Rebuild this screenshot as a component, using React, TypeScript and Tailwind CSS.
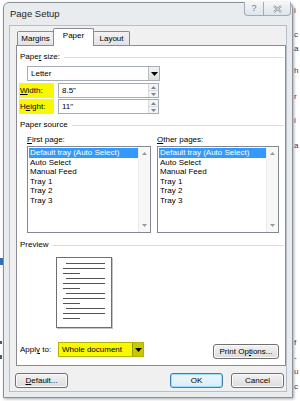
import React from "react";

const Caret = ({ up = false, className = "" }: { up?: boolean; className?: string }) => (
  <svg width="7" height="4" viewBox="0 0 7 4" className={className}>
    <path d={up ? "M0 4 L3.5 0 L7 4 Z" : "M0 0 L7 0 L3.5 4 Z"} fill="currentColor" />
  </svg>
);

const GroupHeader = ({ children, className = "" }: { children: React.ReactNode; className?: string }) => (
  <div className={`flex items-center h-[10px] ${className}`}>
    <span className="leading-[10px] whitespace-nowrap">{children}</span>
    <div className="flex-1 h-px bg-[#dcdcdc] ml-[4px] mr-[1px]" />
  </div>
);

const Select = ({ value, w, yellow = false }: { value: string; w: string; yellow?: boolean }) => (
  <div
    className={`flex h-[15px] ${w} border ${
      yellow ? "border-[#b4b400] bg-[#f8f800]" : "border-[#a5acb5] bg-white"
    }`}
  >
    <span className="flex-1 pl-[3px] leading-[13px] whitespace-nowrap">{value}</span>
    <div
      className={`w-[11px] flex items-center justify-center border-l ${
        yellow ? "border-[#9a9a00] bg-[#c9c900]" : "border-[#b7bcc2] bg-gradient-to-b from-[#f3f3f3] to-[#dedede]"
      }`}
    >
      <Caret className="text-black" />
    </div>
  </div>
);

const Spin = ({ label, accent, value }: { label: string; accent: number; value: string }) => (
  <div className="flex items-center h-[15px]">
    <div className="-ml-[1px] w-[35px] h-[15px] bg-[#f8f800] pl-[1px] leading-[15px]">
      {label.slice(0, accent)}
      <span className="underline">{label[accent]}</span>
      {label.slice(accent + 1)}
    </div>
    <div className="ml-[4px] w-[101px] h-[15px] flex border border-[#a5acb5] bg-white">
      <span className="flex-1 pl-[3px] leading-[13px]">{value}</span>
      <div className="w-[10px] flex flex-col border-l border-[#d5d8dc] bg-[#f4f4f4] text-[#7b8594]">
        <div className="flex-1 flex items-center justify-center border-b border-[#d5d8dc]">
          <svg width="5" height="3" viewBox="0 0 5 3"><path d="M0 3 L2.5 0 L5 3 Z" fill="currentColor" /></svg>
        </div>
        <div className="flex-1 flex items-center justify-center">
          <svg width="5" height="3" viewBox="0 0 5 3"><path d="M0 0 L5 0 L2.5 3 Z" fill="currentColor" /></svg>
        </div>
      </div>
    </div>
  </div>
);

const trays = ["Default tray (Auto Select)", "Auto Select", "Manual Feed", "Tray 1", "Tray 2", "Tray 3"];

const ListBox = ({ w }: { w: string }) => (
  <div className={`${w} h-[87px] flex border border-[#828790] bg-white`}>
    <div className="flex-1 pt-px pl-px">
      {trays.map((t, i) => (
        <div
          key={t}
          className={`h-[9.6px] leading-[9.6px] pl-[1px] whitespace-nowrap ${
            i === 0 ? "bg-[#3399ff] text-white" : "text-black"
          }`}
        >
          {t}
        </div>
      ))}
    </div>
    <div className="w-[12px] flex flex-col justify-between items-center py-[5px] bg-[#f7f7f7] border-l border-[#ececec] text-[#9a9a9a]">
      <svg width="5" height="3" viewBox="0 0 5 3"><path d="M0 3 L2.5 0 L5 3 Z" fill="currentColor" /></svg>
      <svg width="5" height="3" viewBox="0 0 5 3"><path d="M0 0 L5 0 L2.5 3 Z" fill="currentColor" /></svg>
    </div>
  </div>
);

const Para = () => (
  <div className="flex flex-col gap-[4px]">
    <div className="h-px bg-[#555] ml-[3px]" />
    <div className="h-px bg-[#555]" />
    <div className="h-px bg-[#555] w-[17px]" />
  </div>
);

const Button = ({ children, w, focus = false }: { children: React.ReactNode; w: string; focus?: boolean }) => (
  <div
    className={`${w} h-[15px] rounded-[3px] border flex items-center justify-center leading-none ${
      focus
        ? "border-[#3c7fb1] bg-gradient-to-b from-[#eaf6fd] to-[#d9eefa] shadow-[inset_0_0_0_1px_#9fdcf6]"
        : "border-[#707070] bg-gradient-to-b from-[#f2f2f2] to-[#dcdcdc] shadow-[inset_0_0_0_1px_#fbfbfb]"
    }`}
  >
    {children}
  </div>
);

// letters of the document that peek out beside the dialog
const edgeText: [number, string][] = [
  [6, "i"],
  [30, "c"],
  [44, "a"],
  [66, "h"],
  [92, "r"],
  [116, "i"],
  [141, "a"],
  [338, "f"],
  [353, "-"],
  [367, "u"],
  [382, "c"],
];

export default function App() {
  return (
    <div className="w-[300px] h-[401px] bg-white flex overflow-hidden font-['Liberation_Sans',Arial,sans-serif] text-[8px] text-black">
      {/* document behind, left edge */}
      <div className="w-[3px] flex flex-col">
        <div className="h-[258px]" />
        <div className="h-[7px] bg-[#3a6fb5]" />
        <div className="mt-[76px] h-[3px] w-[2px] bg-[#4a5a78]" />
        <div className="mt-[11px] h-[4px] w-[2px] bg-[#4a5a78]" />
      </div>

      {/* dialog window */}
      <div className="mt-[2px] w-[290px] h-[396px] flex flex-col border border-[#8a939d] rounded-t-[6px] bg-[#e9ecef] shadow-[1px_1px_3px_rgba(0,0,0,0.35)]">
        <div className="h-[22px] flex items-start">
          <span className="pl-[6px] pt-[5px] text-[9.5px] leading-[11px] text-[#1e1e1e]">Page Setup</span>
          <div className="flex-1" />
          <div className="-mt-px flex mr-px">
            <div className="w-[19px] h-[14px] border border-t-0 border-r-0 border-[#a2acb8] rounded-bl-[4px] bg-gradient-to-b from-[#f4f6f8] to-[#e0e5ea] flex items-center justify-center text-[9px] text-[#6d7580] leading-none">
              ?
            </div>
            <div className="w-[28px] h-[14px] border border-t-0 border-[#a2acb8] rounded-br-[4px] bg-gradient-to-b from-[#f4f6f8] to-[#e0e5ea] flex items-center justify-center">
              <svg width="9" height="8" viewBox="0 0 9 8">
                <path d="M1 1 L8 7 M8 1 L1 7" stroke="#8a929c" strokeWidth="2.2" />
                <path d="M1 1 L8 7 M8 1 L1 7" stroke="#eef0f2" strokeWidth="0.8" />
              </svg>
            </div>
          </div>
        </div>

        <div className="mx-[5px] mb-[5px] flex-1 flex flex-col bg-[#f0f0f0] border border-[#b6bdc6]">
          {/* tabs */}
          <div className="flex items-end h-[19px] pl-[7px]">
            <div className="w-[37px] h-[14px] border border-b-0 border-[#898c95] rounded-t-[2px] bg-gradient-to-b from-[#f3f3f3] to-[#e2e2e2] flex items-center justify-center leading-none">
              Margins
            </div>
            <div className="relative z-10 -ml-px -mb-px w-[41px] h-[18px] border border-b-0 border-[#898c95] rounded-t-[2px] bg-white flex items-start pt-[3px] justify-center leading-none">
              Paper
            </div>
            <div className="-ml-px w-[37px] h-[14px] border border-b-0 border-[#898c95] rounded-t-[2px] bg-gradient-to-b from-[#f3f3f3] to-[#e2e2e2] flex items-center justify-center leading-none">
              Layout
            </div>
          </div>

          {/* panel */}
          <div className="ml-[6px] w-[270px] h-[321px] border border-[#898c95] bg-white flex flex-col pl-[3px]">
            <GroupHeader className="mt-[6px]">
              Pape<span className="underline">r</span> size:
            </GroupHeader>
            <div className="mt-[4px] ml-[7px]">
              <Select value="Letter" w="w-[133px]" />
            </div>
            <div className="mt-[2px]">
              <Spin label="Width:" accent={0} value={'8.5"'} />
            </div>
            <div className="mt-[1px]">
              <Spin label="Height:" accent={1} value={'11"'} />
            </div>

            <GroupHeader className="mt-[6px]">Paper source</GroupHeader>
            <div className="mt-[5px] ml-[7px] flex gap-[6px]">
              <div className="flex flex-col">
                <span className="h-[10px] leading-[10px]">
                  <span className="underline">F</span>irst page:
                </span>
                <div className="mt-px">
                  <ListBox w="w-[124px]" />
                </div>
              </div>
              <div className="flex flex-col">
                <span className="h-[10px] leading-[10px]">
                  <span className="underline">O</span>ther pages:
                </span>
                <div className="mt-px">
                  <ListBox w="w-[122px]" />
                </div>
              </div>
            </div>

            <GroupHeader className="mt-[7px]">Preview</GroupHeader>
            <div className="mt-[7px] ml-[36px] w-[56px] h-[71px] border border-[#6f6f6f] bg-white shadow-[1px_1px_0_#c4c4c4] px-[6px] pt-[5px] flex flex-col gap-[4px]">
              <Para />
              <Para />
              <Para />
              <Para />
            </div>

            <div className="mt-[14px] flex items-start">
              <span className="w-[38px] leading-[15px]">
                Appl<span className="underline">y</span> to:
              </span>
              <Select value="Whole document" w="w-[86px]" yellow />
              <div className="flex-1" />
              <div className="mt-[2px] mr-[6px]">
                <Button w="w-[66px]">
                  Print Op<span className="underline">t</span>ions...
                </Button>
              </div>
            </div>
          </div>

          {/* bottom buttons */}
          <div className="mt-[7px] flex pl-[5px]">
            <Button w="w-[53px]">
              <span className="underline">D</span>efault...
            </Button>
            <div className="flex-1" />
            <Button w="w-[53px]" focus>
              OK
            </Button>
            <div className="w-[8px]" />
            <Button w="w-[53px]">Cancel</Button>
            <div className="w-[2px]" />
          </div>
        </div>
      </div>

      {/* document behind, right edge */}
      <div className="flex-1 flex flex-col pl-[1px] text-[8px] leading-[9px] text-[#2a3b5c]">
        {edgeText.map(([top, ch], i) => (
          <span
            key={i}
            style={{ marginTop: top - (i === 0 ? 0 : edgeText[i - 1][0] + 9) }}
            className="h-[9px]"
          >
            {ch}
          </span>
        ))}
      </div>
    </div>
  );
}
